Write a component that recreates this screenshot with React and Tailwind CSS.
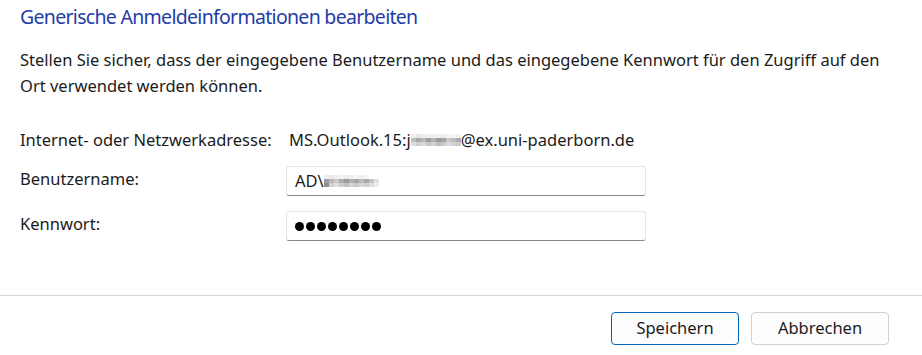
const font = { fontFamily: '"Noto Sans", "Open Sans", sans-serif' };

function Blur({ cells }) {
  // pixelated redaction, rows of grey blocks
  return (
    <span className="inline-flex flex-col align-middle">
      {cells.map((row, i) => (
        <span key={i} className="flex">
          {row.map((c, j) => (
            <span key={j} className="block w-[5px] h-[4px]" style={{ background: c }} />
          ))}
        </span>
      ))}
    </span>
  );
}

const addrBlur = [
  ["#eee", "#e6e6e6", "#ededed", "#f2f2f2", "#eee", "#f0f0f0", "#ececec", "#f3f3f3", "#f5f5f5", "#f0f0f0"],
  ["#bdbdbd", "#a9a9a9", "#b8b8b8", "#9e9e9e", "#b3b3b3", "#9a9a9a", "#a5a5a5", "#c9c9c9", "#bcbcbc", "#ababab"],
  ["#dcdcdc", "#cfcfcf", "#d8d8d8", "#c4c4c4", "#d2d2d2", "#bdbdbd", "#c8c8c8", "#dadada", "#d1d1d1", "#cbcbcb"],
];

const userBlur = [
  ["#f0f0f0", "#e8e8e8", "#eee", "#f2f2f2", "#ececec", "#efefef", "#f4f4f4", "#f0f0f0", "#f7f7f7", "#fff", "#fff"],
  ["#9e9e9e", "#b8b8b8", "#c9c9c9", "#adadad", "#9c9c9c", "#b1b1b1", "#a4a4a4", "#bcbcbc", "#aaaaaa", "#c4c4c4", "#e2e2e2"],
  ["#8f8f8f", "#d0d0d0", "#dcdcdc", "#cdcdcd", "#c4c4c4", "#d4d4d4", "#c8c8c8", "#d6d6d6", "#cfcfcf", "#dedede", "#eee"],
];

export default function App() {
  return (
    <div className="w-[922px] h-[355px] bg-white flex flex-col text-[#1b1b1b]" style={font}>
      <div className="flex-1 px-5">
        <h1 className="text-[19.5px] leading-[26px] pt-[4px] tracking-[-0.7px] text-[#1f3ca8] font-normal">
          Generische Anmeldeinformationen bearbeiten
        </h1>
        <p className="mt-[17px] text-[16.5px] leading-[26px]">
          Stellen Sie sicher, dass der eingegebene Benutzername und das eingegebene Kennwort für den Zugriff auf den
          Ort verwendet werden können.
        </p>

        <div className="mt-[28px] flex items-center h-[26px] text-[16.5px]">
          <span className="w-[269px]">Internet- oder Netzwerkadresse:</span>
          <span className="flex items-center">
            MS.Outlook.15:j
            <Blur cells={addrBlur} />
            @ex.uni-paderborn.de
          </span>
        </div>

        <div className="mt-[13px] flex items-start text-[16.5px]">
          <span className="w-[266px] pt-[1px]">Benutzername:</span>
          <div className="w-[360px] h-[30px] rounded-[3px] border border-[#e5e5e5] border-b-[#868686] flex items-center px-[8px]">
            AD\
            <Blur cells={userBlur} />
          </div>
        </div>

        <div className="mt-[15px] flex items-start text-[16.5px]">
          <span className="w-[266px] pt-[1px]">Kennwort:</span>
          <div className="w-[360px] h-[30px] rounded-[3px] border border-[#e5e5e5] border-b-[#868686] flex items-center px-[8px] gap-[2px]">
            {Array.from({ length: 8 }).map((_, i) => (
              <span key={i} className="block w-[9px] h-[9px] rounded-full bg-black" />
            ))}
          </div>
        </div>
      </div>

      <div className="border-t border-[#d5d5d5] h-[60px] flex items-start justify-end gap-3 pr-[33px] pt-[16px]">
        <button className="w-[128px] h-[33px] rounded-[4px] border border-[#0067c0] bg-[#fdfdfd] text-[16.5px] text-[#1b1b1b]">
          Speichern
        </button>
        <button className="w-[138px] h-[33px] rounded-[4px] border border-[#d0d0d0] bg-[#fdfdfd] text-[16.5px] text-[#1b1b1b]">
          Abbrechen
        </button>
      </div>
    </div>
  );
}
